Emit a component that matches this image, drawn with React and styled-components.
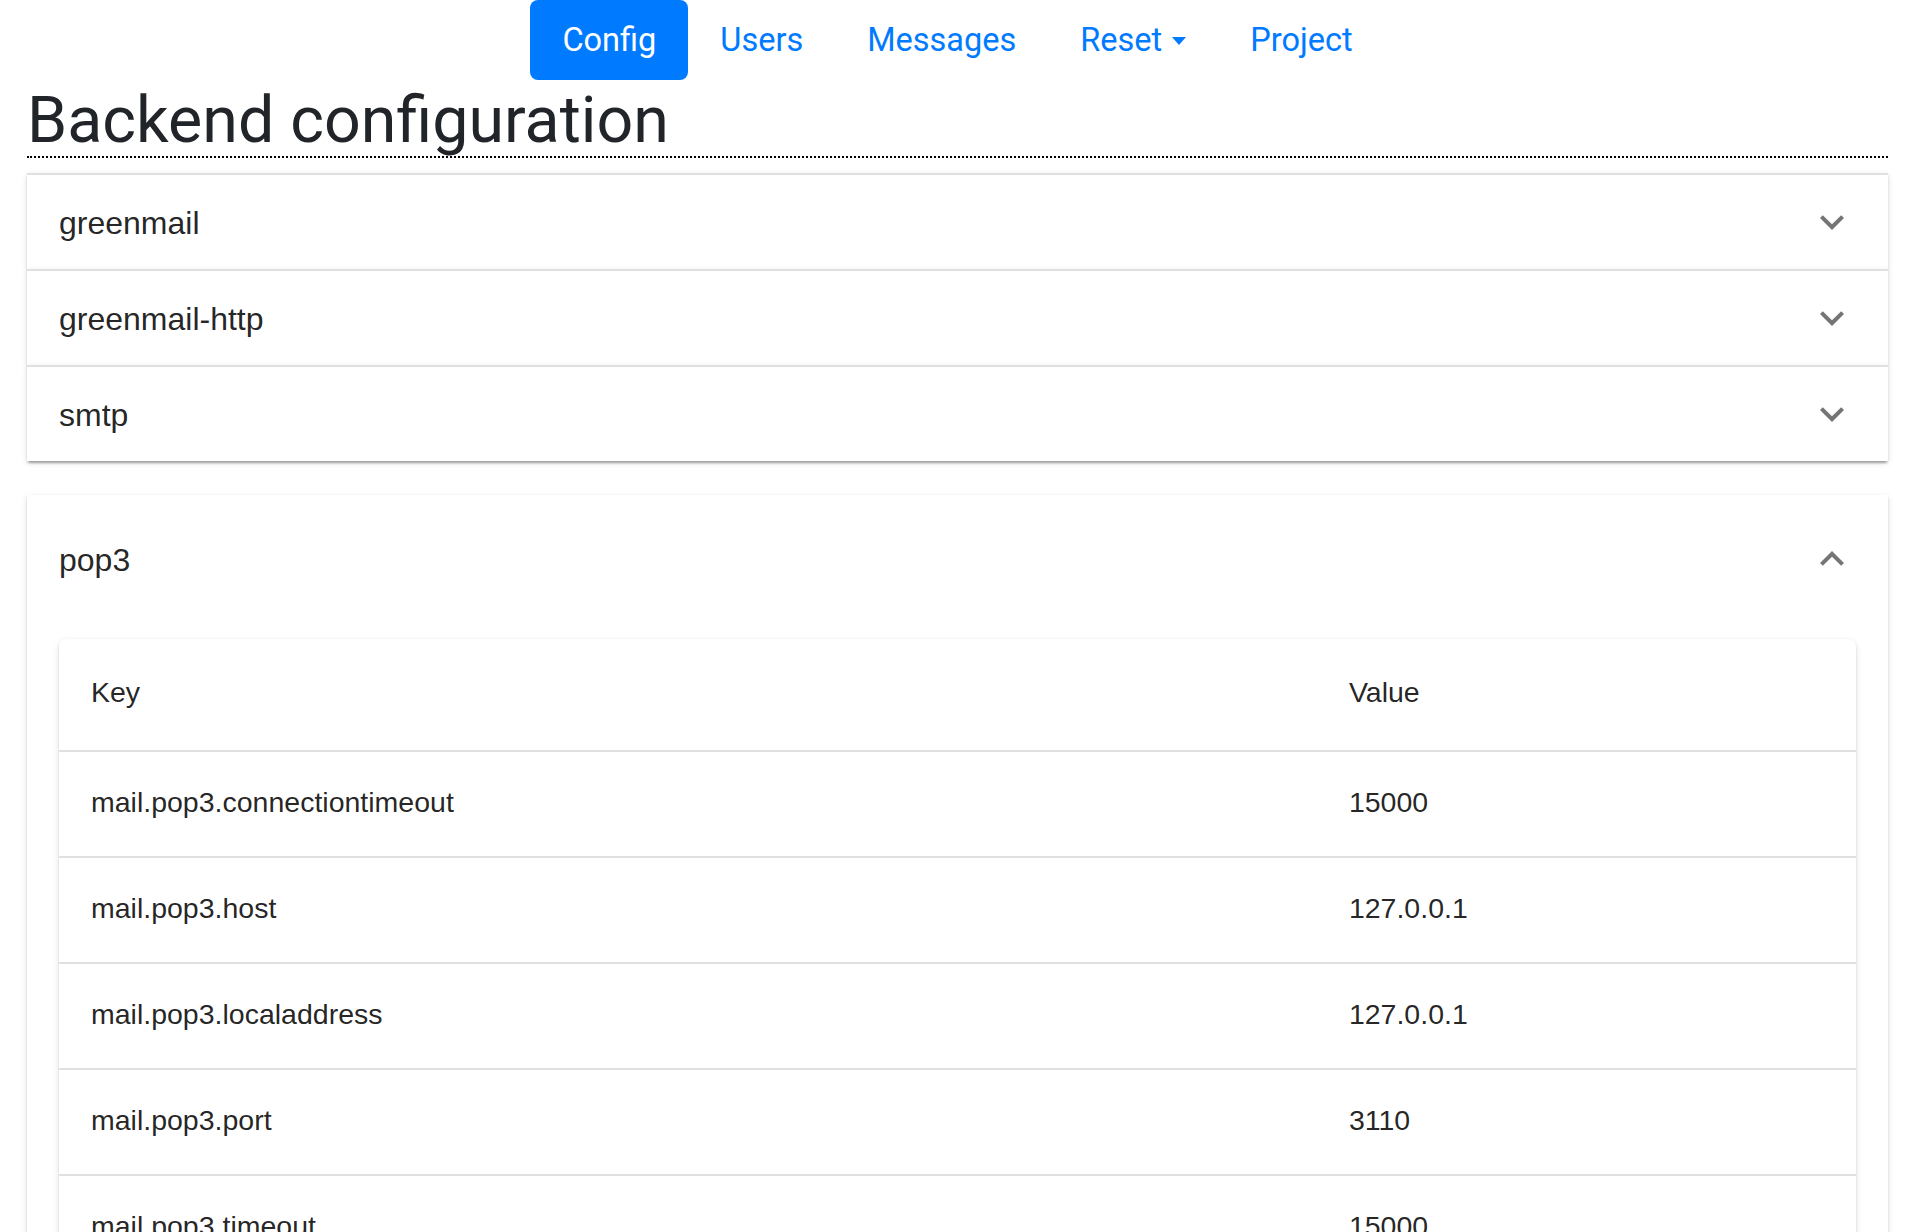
import React from 'react';
import styled, { createGlobalStyle } from 'styled-components';

const GlobalStyle = createGlobalStyle`
	body {
		margin: 0;
		background: #fff;
		font-family: Roboto, 'Liberation Sans', Arial, sans-serif;
	}
`;

const Page = styled.div`
	padding: 0 28px 0 27px;
`;

const Nav = styled.nav`
	display: flex;
	justify-content: center;
`;

const NavLink = styled.a`
	display: flex;
	align-items: center;
	padding: 16px 32px;
	font-family: Roboto, 'Liberation Sans', sans-serif;
	font-size: 32.5px;
	line-height: 48px;
	color: ${(p) => (p.$active ? '#fff' : '#007bff')};
	background-color: ${(p) => (p.$active ? '#007bff' : 'transparent')};
	border-radius: 8px;
	text-decoration: none;
	cursor: pointer;
`;

const Caret = styled.span`
	display: inline-block;
	margin-left: 10px;
	margin-top: 2px;
	border-top: 8px solid #007bff;
	border-left: 7.5px solid transparent;
	border-right: 7.5px solid transparent;
`;

const Title = styled.h1`
	margin: 0 0 15px;
	padding-top: 4px;
	font-family: Roboto, 'Liberation Sans', sans-serif;
	font-size: 64.5px;
	font-weight: 400;
	line-height: 72px;
	color: #212529;
	border-bottom: 2px dotted #000;
`;

const Item = styled.div`
	position: relative;
	background: #fff;
	box-sizing: border-box;
	border-top: ${(p) => (p.$expanded ? 'none' : '2px solid rgba(0, 0, 0, 0.12)')};
	margin: ${(p) => (p.$expanded ? '34px 0' : '0')};
	box-shadow: 0 4px 2px -2px rgba(0, 0, 0, 0.2), 0 2px 2px 0 rgba(0, 0, 0, 0.14),
		0 2px 6px 0 rgba(0, 0, 0, 0.12);
`;

const Summary = styled.div`
	display: flex;
	align-items: center;
	justify-content: space-between;
	padding: 0 32px;
	min-height: ${(p) => (p.$expanded ? '128px' : '94px')};
	cursor: pointer;
`;

const SummaryText = styled.span`
	padding-top: 2px;
	font-family: 'Liberation Sans', Helvetica, Arial, sans-serif;
	font-size: 32px;
	line-height: 48px;
	color: rgba(0, 0, 0, 0.87);
`;

const ExpandIcon = styled.svg`
	width: 48px;
	height: 48px;
	fill: rgba(0, 0, 0, 0.54);
	transform: ${(p) => (p.$up ? 'rotate(180deg)' : 'none')};
`;

const Details = styled.div`
	padding: 16px 32px 32px;
`;

const TableCard = styled.div`
	background: #fff;
	border-radius: 8px;
	overflow: hidden;
	box-shadow: 0 4px 2px -2px rgba(0, 0, 0, 0.2), 0 2px 2px 0 rgba(0, 0, 0, 0.14),
		0 2px 6px 0 rgba(0, 0, 0, 0.12);
`;

const Table = styled.table`
	width: 100%;
	border-collapse: collapse;
	font-family: 'Liberation Sans', Helvetica, Arial, sans-serif;
	font-size: 28.5px;
	color: rgba(0, 0, 0, 0.87);
`;

const HeadCell = styled.th`
	padding: 30px 32px 34px;
	line-height: 47px;
	font-weight: 400;
	text-align: left;
	border-bottom: 2px solid rgb(224, 224, 224);
	width: ${(p) => p.$width || 'auto'};
`;

const Cell = styled.td`
	padding: 30px 32px 34px;
	line-height: 40px;
	border-bottom: 2px solid rgb(224, 224, 224);
`;

const Chevron = ({ up }) => (
	<ExpandIcon viewBox='0 0 24 24' $up={up}>
		<path d='M16.59 8.59 12 13.17 7.41 8.59 6 10l6 6 6-6z' />
	</ExpandIcon>
);

const sections = ['greenmail', 'greenmail-http', 'smtp'];

const pop3 = [
	['mail.pop3.connectiontimeout', '15000'],
	['mail.pop3.host', '127.0.0.1'],
	['mail.pop3.localaddress', '127.0.0.1'],
	['mail.pop3.port', '3110'],
	['mail.pop3.timeout', '15000'],
];

export default function App() {
	return (
		<>
			<GlobalStyle />
			<Page>
				<Nav>
					<NavLink $active>Config</NavLink>
					<NavLink>Users</NavLink>
					<NavLink>Messages</NavLink>
					<NavLink>
						Reset
						<Caret />
					</NavLink>
					<NavLink>Project</NavLink>
				</Nav>
				<Title>Backend configuration</Title>
				<div>
					{sections.map((name) => (
						<Item key={name}>
							<Summary>
								<SummaryText>{name}</SummaryText>
								<Chevron />
							</Summary>
						</Item>
					))}
					<Item $expanded>
						<Summary $expanded>
							<SummaryText>pop3</SummaryText>
							<Chevron up />
						</Summary>
						<Details>
							<TableCard>
								<Table>
									<thead>
										<tr>
											<HeadCell $width='70%'>Key</HeadCell>
											<HeadCell>Value</HeadCell>
										</tr>
									</thead>
									<tbody>
										{pop3.map(([key, value]) => (
											<tr key={key}>
												<Cell>{key}</Cell>
												<Cell>{value}</Cell>
											</tr>
										))}
									</tbody>
								</Table>
							</TableCard>
						</Details>
					</Item>
				</div>
			</Page>
		</>
	);
}
